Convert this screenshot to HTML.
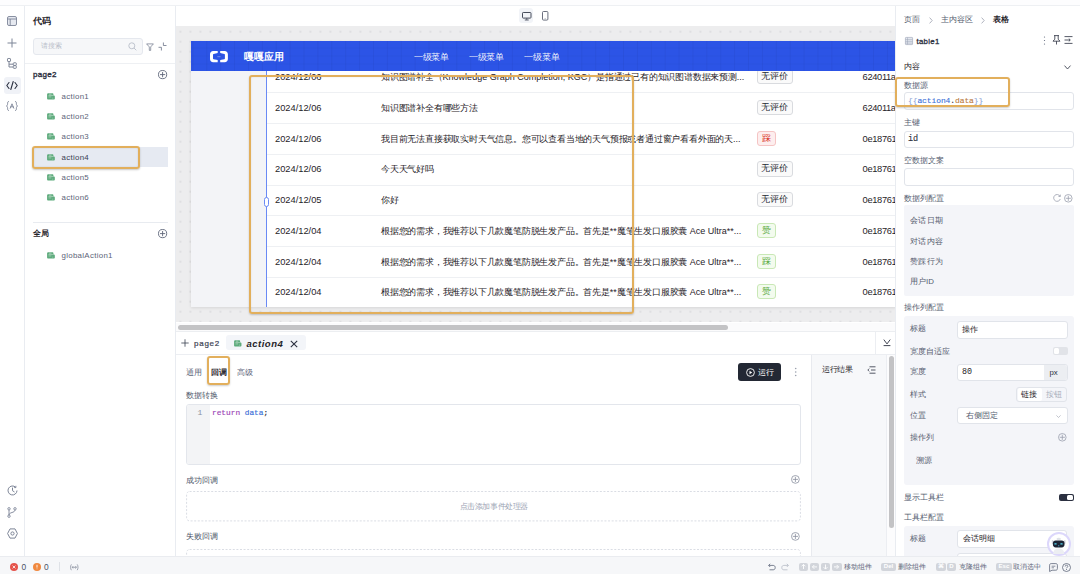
<!DOCTYPE html>
<html><head><meta charset="utf-8">
<style>
*{box-sizing:border-box;margin:0;padding:0}
html,body{width:1080px;height:574px;overflow:hidden;background:#fff;font-family:"Liberation Sans",sans-serif;color:#1f2329}
.a{position:absolute}
.t{position:absolute;white-space:nowrap;line-height:12px;height:12px}
svg{position:absolute;overflow:visible}
.mono{font-family:"Liberation Mono",monospace}
</style></head><body>
<!-- top strip -->
<div class="a" style="left:0;top:0;width:1080px;height:6px;background:#fdfdfe;border-bottom:1px solid #eef0f3"></div>

<!-- LEFT ICON BAR -->
<div class="a" style="left:0;top:6px;width:25px;height:551px;background:#fff;border-right:1px solid #e9ecf1"></div>

<svg style="left:7px;top:15.5px" width="10" height="10" viewBox="0 0 10 10"><rect x="0.5" y="0.5" width="9" height="9" rx="1.5" fill="#e6e9f0" stroke="#7d8597" stroke-width="0.9"/><line x1="0.5" y1="3" x2="9.5" y2="3" stroke="#7d8597" stroke-width="0.9"/><line x1="3.2" y1="3" x2="3.2" y2="9.5" stroke="#7d8597" stroke-width="0.9"/></svg>
<svg style="left:7px;top:37.5px" width="10" height="10" viewBox="0 0 10 10"><path d="M5 0.5V9.5M0.5 5H9.5" stroke="#7d8597" stroke-width="1"/></svg>
<svg style="left:7px;top:57.5px" width="10" height="11" viewBox="0 0 10 11"><rect x="0.5" y="0.5" width="3" height="3" rx="0.6" fill="none" stroke="#7d8597"/><path d="M2 3.5V9H6M2 6.2H6" fill="none" stroke="#7d8597"/><rect x="6.3" y="4.8" width="3" height="2.6" rx="0.6" fill="none" stroke="#7d8597"/><rect x="6.3" y="7.7" width="3" height="2.6" rx="0.6" fill="none" stroke="#7d8597"/></svg>
<div class="a" style="left:3.5px;top:76.5px;width:17.5px;height:17px;border-radius:3px;background:#f0f2f7"></div>
<svg style="left:6px;top:80.5px" width="12" height="9" viewBox="0 0 12 9"><path d="M3 1.5L0.8 4.5L3 7.5M9 1.5L11.2 4.5L9 7.5M7.2 0.5L4.8 8.5" fill="none" stroke="#2b3040" stroke-width="1.1" stroke-linecap="round" stroke-linejoin="round"/></svg>
<svg style="left:6px;top:101px" width="12" height="10" viewBox="0 0 12 10"><path d="M2.6 0.5C1.5 0.5 1.6 1.5 1.6 2.8C1.6 4 1.2 4.8 0.5 5C1.2 5.2 1.6 6 1.6 7.2C1.6 8.5 1.5 9.5 2.6 9.5M9.4 0.5C10.5 0.5 10.4 1.5 10.4 2.8C10.4 4 10.8 4.8 11.5 5C10.8 5.2 10.4 6 10.4 7.2C10.4 8.5 10.5 9.5 9.4 9.5M4.2 7.2L6 2.8L7.8 7.2M4.8 5.8H7.2" fill="none" stroke="#7d8597" stroke-width="0.9" stroke-linecap="round"/></svg>
<svg style="left:6.5px;top:484.5px" width="11" height="11" viewBox="0 0 11 11"><path d="M10 5.5A4.5 4.5 0 1 1 8.7 2.3" fill="none" stroke="#7d8597" stroke-width="1"/><path d="M8.9 0.8V2.6H7.1" fill="none" stroke="#7d8597" stroke-width="0.9"/><path d="M5.5 3V5.7L7.2 6.8" fill="none" stroke="#7d8597" stroke-width="1" stroke-linecap="round"/></svg>
<svg style="left:7px;top:506.5px" width="10" height="11" viewBox="0 0 10 11"><circle cx="2" cy="1.8" r="1.2" fill="none" stroke="#7d8597" stroke-width="0.9"/><circle cx="2" cy="9.2" r="1.2" fill="none" stroke="#7d8597" stroke-width="0.9"/><circle cx="8" cy="1.8" r="1.2" fill="none" stroke="#7d8597" stroke-width="0.9"/><path d="M2 3V8M8 3C8 6 2 5 2 8" fill="none" stroke="#7d8597" stroke-width="0.9"/></svg>
<svg style="left:6.5px;top:527.5px" width="11" height="11" viewBox="0 0 11 11"><path d="M3 0.9H8L10.4 5.5L8 10.1H3L0.6 5.5Z" fill="none" stroke="#7d8597" stroke-width="1" stroke-linejoin="round"/><circle cx="5.5" cy="5.5" r="1.6" fill="none" stroke="#7d8597" stroke-width="1"/></svg>


<!-- LEFT PANEL -->
<div class="a" style="left:25px;top:6px;width:151px;height:551px;background:#fff;border-right:1px solid #e9ecf1"></div>

<div class="t" style="left:33px;top:14.5px;font-size:9px;font-weight:bold;color:#1f2329">代码</div>
<div class="a" style="left:33px;top:37.5px;width:109.5px;height:17px;border-radius:3px;background:#f6f7f9;border:1px solid #e5e8ee"></div>
<div class="t" style="left:41px;top:40px;font-size:7.4px;color:#b9bec9">请搜索</div>
<svg style="left:127.5px;top:42px" width="9" height="9" viewBox="0 0 9 9"><circle cx="3.8" cy="3.8" r="3" fill="none" stroke="#b9bec9" stroke-width="0.9"/><path d="M6 6L8.3 8.3" stroke="#b9bec9" stroke-width="0.9"/></svg>
<svg style="left:146px;top:42.5px" width="8" height="8" viewBox="0 0 8 8"><path d="M0.6 0.9H7.4L4.7 3.9V7.4H3.3V3.9Z" fill="none" stroke="#6a7286" stroke-width="0.7" stroke-linejoin="round"/></svg>
<svg style="left:158px;top:41.5px" width="9" height="9" viewBox="0 0 9 9"><path d="M0.5 5.3H3.4V8.5M5.4 0.5V3.5H8.5" fill="none" stroke="#6a7286" stroke-width="0.8"/></svg>
<div class="a" style="left:25px;top:62.5px;width:150px;height:1px;background:#eef0f3"></div>
<div class="t" style="left:33px;top:68.8px;font-size:8px;letter-spacing:0.3px;-webkit-text-stroke:0.35px #2b3040;color:#2b3040">page2</div>
<svg style="left:157.8px;top:69.9px" width="9.2" height="9.2" viewBox="0 0 9.2 9.2"><circle cx="4.6" cy="4.6" r="4.1" fill="none" stroke="#5c6478" stroke-width="0.9"/><path d="M4.6 1.9999999999999996V7.199999999999999M1.9999999999999996 4.6H7.199999999999999" stroke="#5c6478" stroke-width="0.9"/></svg>
<svg style="left:47px;top:92.7px" width="8.4" height="6.8" viewBox="0 0 9 9" preserveAspectRatio="none"><path d="M1.6 0.3H5.6C6.4 0.3 6.9 0.8 6.9 1.6V3.4H7.2C7.9 3.4 8.4 3.9 8.4 4.6V7.2C8.4 8 7.9 8.5 7.2 8.5H1.4C0.6 8.5 0.1 8 0.1 7.2V1.8C0.1 0.9 0.7 0.3 1.6 0.3Z" fill="#5dab7c"/><path d="M2.2 1.6H4.8M1.6 3.4H6.9M1.6 5.2H4.6M6.2 6.2V7.4" stroke="#fff" stroke-width="0.55" stroke-opacity="0.85"/></svg><div class="t" style="left:61.5px;top:90.6px;font-size:7.9px;letter-spacing:0.3px;color:#5c6478">action1</div><svg style="left:47px;top:113.0px" width="8.4" height="6.8" viewBox="0 0 9 9" preserveAspectRatio="none"><path d="M1.6 0.3H5.6C6.4 0.3 6.9 0.8 6.9 1.6V3.4H7.2C7.9 3.4 8.4 3.9 8.4 4.6V7.2C8.4 8 7.9 8.5 7.2 8.5H1.4C0.6 8.5 0.1 8 0.1 7.2V1.8C0.1 0.9 0.7 0.3 1.6 0.3Z" fill="#5dab7c"/><path d="M2.2 1.6H4.8M1.6 3.4H6.9M1.6 5.2H4.6M6.2 6.2V7.4" stroke="#fff" stroke-width="0.55" stroke-opacity="0.85"/></svg><div class="t" style="left:61.5px;top:110.9px;font-size:7.9px;letter-spacing:0.3px;color:#5c6478">action2</div><svg style="left:47px;top:132.9px" width="8.4" height="6.8" viewBox="0 0 9 9" preserveAspectRatio="none"><path d="M1.6 0.3H5.6C6.4 0.3 6.9 0.8 6.9 1.6V3.4H7.2C7.9 3.4 8.4 3.9 8.4 4.6V7.2C8.4 8 7.9 8.5 7.2 8.5H1.4C0.6 8.5 0.1 8 0.1 7.2V1.8C0.1 0.9 0.7 0.3 1.6 0.3Z" fill="#5dab7c"/><path d="M2.2 1.6H4.8M1.6 3.4H6.9M1.6 5.2H4.6M6.2 6.2V7.4" stroke="#fff" stroke-width="0.55" stroke-opacity="0.85"/></svg><div class="t" style="left:61.5px;top:130.8px;font-size:7.9px;letter-spacing:0.3px;color:#5c6478">action3</div>
<div class="a" style="left:33px;top:147px;width:134.5px;height:20px;background:#e6eaf2"></div>
<svg style="left:47px;top:153.5px" width="8.4" height="6.8" viewBox="0 0 9 9" preserveAspectRatio="none"><path d="M1.6 0.3H5.6C6.4 0.3 6.9 0.8 6.9 1.6V3.4H7.2C7.9 3.4 8.4 3.9 8.4 4.6V7.2C8.4 8 7.9 8.5 7.2 8.5H1.4C0.6 8.5 0.1 8 0.1 7.2V1.8C0.1 0.9 0.7 0.3 1.6 0.3Z" fill="#5dab7c"/><path d="M2.2 1.6H4.8M1.6 3.4H6.9M1.6 5.2H4.6M6.2 6.2V7.4" stroke="#fff" stroke-width="0.55" stroke-opacity="0.85"/></svg><div class="t" style="left:61.5px;top:151.9px;font-size:7.9px;letter-spacing:0.3px;color:#3a4152">action4</div>
<div class="a" style="left:32.3px;top:146.2px;width:107.8px;height:23px;border:2px solid #e2af5c;border-radius:3px;box-shadow:0 1px 2px rgba(0,0,0,0.22), inset 0 0 2px rgba(0,0,0,0.12)"></div>
<svg style="left:47px;top:173.6px" width="8.4" height="6.8" viewBox="0 0 9 9" preserveAspectRatio="none"><path d="M1.6 0.3H5.6C6.4 0.3 6.9 0.8 6.9 1.6V3.4H7.2C7.9 3.4 8.4 3.9 8.4 4.6V7.2C8.4 8 7.9 8.5 7.2 8.5H1.4C0.6 8.5 0.1 8 0.1 7.2V1.8C0.1 0.9 0.7 0.3 1.6 0.3Z" fill="#5dab7c"/><path d="M2.2 1.6H4.8M1.6 3.4H6.9M1.6 5.2H4.6M6.2 6.2V7.4" stroke="#fff" stroke-width="0.55" stroke-opacity="0.85"/></svg><div class="t" style="left:61.5px;top:171.5px;font-size:7.9px;letter-spacing:0.3px;color:#5c6478">action5</div><svg style="left:47px;top:193.9px" width="8.4" height="6.8" viewBox="0 0 9 9" preserveAspectRatio="none"><path d="M1.6 0.3H5.6C6.4 0.3 6.9 0.8 6.9 1.6V3.4H7.2C7.9 3.4 8.4 3.9 8.4 4.6V7.2C8.4 8 7.9 8.5 7.2 8.5H1.4C0.6 8.5 0.1 8 0.1 7.2V1.8C0.1 0.9 0.7 0.3 1.6 0.3Z" fill="#5dab7c"/><path d="M2.2 1.6H4.8M1.6 3.4H6.9M1.6 5.2H4.6M6.2 6.2V7.4" stroke="#fff" stroke-width="0.55" stroke-opacity="0.85"/></svg><div class="t" style="left:61.5px;top:191.8px;font-size:7.9px;letter-spacing:0.3px;color:#5c6478">action6</div>
<div class="a" style="left:33px;top:222px;width:134.5px;height:1px;background:#e8ebf0"></div>
<div class="t" style="left:33px;top:227.5px;font-size:7.8px;font-weight:bold;color:#1f2329">全局</div>
<svg style="left:157.8px;top:228.8px" width="9.2" height="9.2" viewBox="0 0 9.2 9.2"><circle cx="4.6" cy="4.6" r="4.1" fill="none" stroke="#5c6478" stroke-width="0.9"/><path d="M4.6 1.9999999999999996V7.199999999999999M1.9999999999999996 4.6H7.199999999999999" stroke="#5c6478" stroke-width="0.9"/></svg>
<svg style="left:47px;top:251.6px" width="8.4" height="6.8" viewBox="0 0 9 9" preserveAspectRatio="none"><path d="M1.6 0.3H5.6C6.4 0.3 6.9 0.8 6.9 1.6V3.4H7.2C7.9 3.4 8.4 3.9 8.4 4.6V7.2C8.4 8 7.9 8.5 7.2 8.5H1.4C0.6 8.5 0.1 8 0.1 7.2V1.8C0.1 0.9 0.7 0.3 1.6 0.3Z" fill="#5dab7c"/><path d="M2.2 1.6H4.8M1.6 3.4H6.9M1.6 5.2H4.6M6.2 6.2V7.4" stroke="#fff" stroke-width="0.55" stroke-opacity="0.85"/></svg><div class="t" style="left:61.5px;top:249.5px;font-size:7.9px;letter-spacing:0.3px;color:#5c6478">globalAction1</div>


<!-- CANVAS -->

<div class="a" style="left:176px;top:6px;width:720px;height:20px;background:#fff"></div>
<div class="a" style="left:519.3px;top:8px;width:13.7px;height:15.2px;border-radius:3px;background:#f2f4f8"></div>
<svg style="left:521.7px;top:11.6px" width="9.5" height="8.6" viewBox="0 0 9.5 8.6"><rect x="0.5" y="0.5" width="8.5" height="5.6" rx="0.7" fill="none" stroke="#454b5a" stroke-width="1"/><path d="M4.75 6.2V7.8M2.8 8H6.7" stroke="#454b5a" stroke-width="0.9"/></svg><svg style="left:541.7px;top:11.1px" width="6.4" height="9.6" viewBox="0 0 6.4 9.6"><rect x="0.5" y="0.5" width="5.4" height="8.6" rx="1" fill="none" stroke="#5a6070" stroke-width="0.9"/><path d="M2.6 7.6H3.8" stroke="#8a90a0" stroke-width="0.6"/></svg>
<div class="a" style="left:176px;top:26px;width:720px;height:296px;background-color:#ededee;background-image:radial-gradient(circle at 5px 5px,#cfcfd3 0.55px,transparent 0.85px);background-size:10px 10px;background-position:-0.6px 0.7px"></div>
<div class="a" style="left:190.5px;top:41px;width:705.5px;height:266px;background:#f3f4f7;box-shadow:0 1px 3px rgba(0,0,0,0.1)"></div>
<div class="a" style="left:267px;top:71px;width:629px;height:236px;background:#fff;overflow:hidden">
</div>
<div class="a" style="left:176px;top:41px;width:720px;height:272px;overflow:hidden">
<div class="a" style="left:-176px;top:-41px;width:1080px;height:574px"><div class="t" style="left:275px;top:71.2px;font-size:9.3px;color:#1f2329">2024/12/06</div><div class="t" style="left:381px;top:71.2px;font-size:8.6px;color:#1f2329;letter-spacing:-0.2px">知识图谱补全（<span style="letter-spacing:0;font-size:9px">Knowledge Graph Completion, KGC</span>）是指通过已有的知识图谱数据来预测<span style="letter-spacing:0;font-size:9px">...</span></div><div class="a" style="left:756.5px;top:69.2px;width:36px;height:15.2px;border-radius:3px;background:#fafafa;border:1px solid #d9dbdf;color:#262a33;font-size:9px;line-height:13.5px;text-align:center;white-space:nowrap">无评价</div><div class="t" style="left:862.6px;top:71.2px;font-size:9.3px;letter-spacing:-0.35px;color:#1f2329">624011a</div><div class="a" style="left:267px;top:92.2px;width:629px;height:1px;background:#eef0f3"></div><div class="t" style="left:275px;top:101.9px;font-size:9.3px;color:#1f2329">2024/12/06</div><div class="t" style="left:381px;top:101.9px;font-size:8.6px;color:#1f2329;letter-spacing:-0.2px">知识图谱补全有哪些方法</div><div class="a" style="left:756.5px;top:99.9px;width:36px;height:15.2px;border-radius:3px;background:#fafafa;border:1px solid #d9dbdf;color:#262a33;font-size:9px;line-height:13.5px;text-align:center;white-space:nowrap">无评价</div><div class="t" style="left:862.6px;top:101.9px;font-size:9.3px;letter-spacing:-0.35px;color:#1f2329">624011a</div><div class="a" style="left:267px;top:123.0px;width:629px;height:1px;background:#eef0f3"></div><div class="t" style="left:275px;top:132.7px;font-size:9.3px;color:#1f2329">2024/12/06</div><div class="t" style="left:381px;top:132.7px;font-size:8.6px;color:#1f2329;letter-spacing:-0.2px">我目前无法直接获取实时天气信息。您可以查看当地的天气预报或者通过窗户看看外面的天<span style="letter-spacing:0;font-size:9px">...</span></div><div class="a" style="left:756.5px;top:130.7px;width:19px;height:15.2px;border-radius:3px;background:#fdeeee;border:1px solid #f5c4c4;color:#d93026;font-size:9px;line-height:13.5px;text-align:center;white-space:nowrap">踩</div><div class="t" style="left:862.6px;top:132.7px;font-size:9.3px;letter-spacing:-0.35px;color:#1f2329">0e18761</div><div class="a" style="left:267px;top:153.8px;width:629px;height:1px;background:#eef0f3"></div><div class="t" style="left:275px;top:163.4px;font-size:9.3px;color:#1f2329">2024/12/06</div><div class="t" style="left:381px;top:163.4px;font-size:8.6px;color:#1f2329;letter-spacing:-0.2px">今天天气好吗</div><div class="a" style="left:756.5px;top:161.4px;width:36px;height:15.2px;border-radius:3px;background:#fafafa;border:1px solid #d9dbdf;color:#262a33;font-size:9px;line-height:13.5px;text-align:center;white-space:nowrap">无评价</div><div class="t" style="left:862.6px;top:163.4px;font-size:9.3px;letter-spacing:-0.35px;color:#1f2329">0e18761</div><div class="a" style="left:267px;top:184.6px;width:629px;height:1px;background:#eef0f3"></div><div class="t" style="left:275px;top:194.1px;font-size:9.3px;color:#1f2329">2024/12/05</div><div class="t" style="left:381px;top:194.1px;font-size:8.6px;color:#1f2329;letter-spacing:-0.2px">你好</div><div class="a" style="left:756.5px;top:192.1px;width:36px;height:15.2px;border-radius:3px;background:#fafafa;border:1px solid #d9dbdf;color:#262a33;font-size:9px;line-height:13.5px;text-align:center;white-space:nowrap">无评价</div><div class="t" style="left:862.6px;top:194.1px;font-size:9.3px;letter-spacing:-0.35px;color:#1f2329">0e18761</div><div class="a" style="left:267px;top:215.4px;width:629px;height:1px;background:#eef0f3"></div><div class="t" style="left:275px;top:224.9px;font-size:9.3px;color:#1f2329">2024/12/04</div><div class="t" style="left:381px;top:224.9px;font-size:8.6px;color:#1f2329;letter-spacing:-0.2px">根据您的需求，我推荐以下几款魔笔防脱生发产品。首先是<span style="letter-spacing:0;font-size:9px">**</span>魔笔生发口服胶囊<span style="letter-spacing:0;font-size:9px"> Ace Ultra**...</span></div><div class="a" style="left:756.5px;top:222.9px;width:19px;height:15.2px;border-radius:3px;background:#f3fbee;border:1px solid #c9e8b6;color:#56a63a;font-size:9px;line-height:13.5px;text-align:center;white-space:nowrap">赞</div><div class="t" style="left:862.6px;top:224.9px;font-size:9.3px;letter-spacing:-0.35px;color:#1f2329">0e18761</div><div class="a" style="left:267px;top:246.2px;width:629px;height:1px;background:#eef0f3"></div><div class="t" style="left:275px;top:255.6px;font-size:9.3px;color:#1f2329">2024/12/04</div><div class="t" style="left:381px;top:255.6px;font-size:8.6px;color:#1f2329;letter-spacing:-0.2px">根据您的需求，我推荐以下几款魔笔防脱生发产品。首先是<span style="letter-spacing:0;font-size:9px">**</span>魔笔生发口服胶囊<span style="letter-spacing:0;font-size:9px"> Ace Ultra**...</span></div><div class="a" style="left:756.5px;top:253.6px;width:19px;height:15.2px;border-radius:3px;background:#f3fbee;border:1px solid #c9e8b6;color:#56a63a;font-size:9px;line-height:13.5px;text-align:center;white-space:nowrap">踩</div><div class="t" style="left:862.6px;top:255.6px;font-size:9.3px;letter-spacing:-0.35px;color:#1f2329">0e18761</div><div class="a" style="left:267px;top:277.0px;width:629px;height:1px;background:#eef0f3"></div><div class="t" style="left:275px;top:286.3px;font-size:9.3px;color:#1f2329">2024/12/04</div><div class="t" style="left:381px;top:286.3px;font-size:8.6px;color:#1f2329;letter-spacing:-0.2px">根据您的需求，我推荐以下几款魔笔防脱生发产品。首先是<span style="letter-spacing:0;font-size:9px">**</span>魔笔生发口服胶囊<span style="letter-spacing:0;font-size:9px"> Ace Ultra**...</span></div><div class="a" style="left:756.5px;top:284.3px;width:19px;height:15.2px;border-radius:3px;background:#f3fbee;border:1px solid #c9e8b6;color:#56a63a;font-size:9px;line-height:13.5px;text-align:center;white-space:nowrap">赞</div><div class="t" style="left:862.6px;top:286.3px;font-size:9.3px;letter-spacing:-0.35px;color:#1f2329">0e18761</div></div>
</div>
<div class="a" style="left:190.5px;top:41px;width:705.5px;height:30px;background-color:#2c54e6;background-image:linear-gradient(90deg,rgba(0,0,40,0.05) 1px,transparent 1px),linear-gradient(0deg,rgba(0,0,40,0.035) 1px,transparent 1px);background-size:13.9px 8px;background-position:1.4px 0,0 -0.5px"></div>
<svg style="left:209.9px;top:50.6px" width="18" height="11.2" viewBox="0 0 18 11.2"><path d="M7.7 0H3.2C1.3 0 0 1.3 0 3.2V8C0 9.9 1.3 11.2 3.2 11.2H7.7V9.1L3.6 8.3C3.2 8.2 3 8 3 7.6V3.6C3 3.2 3.2 3 3.6 2.9L7.7 2.1Z" fill="#fff"/><path d="M10.2 0H14.7C16.6 0 17.9 1.3 17.9 3.2V8C17.9 9.9 16.6 11.2 14.7 11.2H10.2V9.1L14.3 8.3C14.7 8.2 14.9 8 14.9 7.6V3.6C14.9 3.2 14.7 3 14.3 2.9L10.2 2.1Z" fill="#fff"/><path d="M7.3 5.7H10.6" stroke="rgba(255,255,255,0.45)" stroke-width="0.7"/></svg>
<div class="t" style="left:243.5px;top:50.5px;font-size:10px;font-weight:bold;color:#fff">嘎嘎应用</div>
<div class="t" style="left:413.8px;top:50.7px;font-size:8.6px;letter-spacing:-0.2px;color:rgba(255,255,255,0.95)">一级菜单</div>
<div class="t" style="left:468.8px;top:50.7px;font-size:8.6px;letter-spacing:-0.2px;color:rgba(255,255,255,0.95)">一级菜单</div>
<div class="t" style="left:524.2px;top:50.7px;font-size:8.6px;letter-spacing:-0.2px;color:rgba(255,255,255,0.95)">一级菜单</div>
<div class="a" style="left:266px;top:71px;width:1px;height:236px;background:#6a8af5"></div>
<div class="a" style="left:264px;top:197px;width:5px;height:10px;border:1px solid #6a8af5;border-radius:2.5px;background:#fff"></div>
<div class="a" style="left:248.8px;top:74.7px;width:385.2px;height:239px;border:2px solid #e2af5c;border-radius:3px;box-shadow:0 1px 2px rgba(0,0,0,0.2), inset 0 0 2px rgba(0,0,0,0.1)"></div>
<div class="a" style="left:176px;top:322.5px;width:720px;height:9.5px;background:#fbfbfc;border-bottom:1px solid #eceef1"></div>
<div class="a" style="left:178px;top:325px;width:550px;height:5px;border-radius:3px;background:#c3c3c5"></div>


<!-- BOTTOM PANEL -->

<div class="a" style="left:176px;top:332px;width:720px;height:225px;background:#fff"></div>
<div class="a" style="left:176px;top:353.5px;width:720px;height:1px;background:#eceef2"></div>
<svg style="left:180.5px;top:339px" width="8" height="8" viewBox="0 0 8 8"><path d="M4 0.3V7.7M0.3 4H7.7" stroke="#3a4152" stroke-width="0.8"/></svg>
<div class="t" style="left:194px;top:338.2px;font-size:8px;letter-spacing:0.75px;-webkit-text-stroke:0.2px #3a4152;color:#3a4152">page2</div>
<div class="a" style="left:225.5px;top:335.3px;width:80px;height:14.8px;border-radius:3px;background:#f3f5f9"></div>
<svg style="left:234px;top:340px" width="8" height="6.8" viewBox="0 0 9 9" preserveAspectRatio="none"><path d="M1.6 0.3H5.6C6.4 0.3 6.9 0.8 6.9 1.6V3.4H7.2C7.9 3.4 8.4 3.9 8.4 4.6V7.2C8.4 8 7.9 8.5 7.2 8.5H1.4C0.6 8.5 0.1 8 0.1 7.2V1.8C0.1 0.9 0.7 0.3 1.6 0.3Z" fill="#5dab7c"/><path d="M2.2 1.6H4.8M1.6 3.4H6.9M1.6 5.2H4.6M6.2 6.2V7.4" stroke="#fff" stroke-width="0.55" stroke-opacity="0.85"/></svg>
<div class="t" style="left:246.5px;top:337.9px;font-size:9.5px;font-weight:bold;font-style:italic;letter-spacing:0.5px;color:#1f2329">action4</div>
<svg style="left:290px;top:339.5px" width="8" height="8" viewBox="0 0 8 8"><path d="M0.8 0.8L7.2 7.2M7.2 0.8L0.8 7.2" stroke="#2b3040" stroke-width="1.1"/></svg>
<div class="a" style="left:875px;top:332px;width:1px;height:21.5px;background:#eceef2"></div>
<svg style="left:882.5px;top:338.5px" width="8" height="8" viewBox="0 0 8 8"><path d="M0.8 0.6L4 4.9L7.2 0.6M0.6 6.6H7.4" fill="none" stroke="#2b3040" stroke-width="0.9"/></svg>

<div class="t" style="left:185.5px;top:367px;font-size:7.5px;color:#5c6478">通用</div>
<div class="t" style="left:211px;top:367px;font-size:7.5px;font-weight:bold;color:#1f2329">回调</div>
<div class="t" style="left:236.5px;top:367px;font-size:7.5px;color:#5c6478">高级</div>
<div class="a" style="left:206.5px;top:356.2px;width:23.5px;height:28.4px;border:2px solid #e2af5c;border-radius:3px;box-shadow:0 1px 2px rgba(0,0,0,0.2)"></div>

<div class="a" style="left:738px;top:363px;width:43px;height:17.5px;border-radius:3px;background:#232834"></div>
<svg style="left:745.5px;top:367.5px" width="9" height="9" viewBox="0 0 9 9"><circle cx="4.5" cy="4.5" r="3.9" fill="none" stroke="#fff" stroke-width="0.9"/><path d="M3.5 2.8V6.2L6.2 4.5Z" fill="#fff"/></svg>
<div class="t" style="left:758.3px;top:366.7px;font-size:7.6px;color:#fff">运行</div>
<svg style="left:793.8px;top:367px" width="3" height="10" viewBox="0 0 3 10"><circle cx="1.7" cy="1.5" r="0.8" fill="#9aa0ad"/><circle cx="1.7" cy="5" r="0.8" fill="#9aa0ad"/><circle cx="1.7" cy="8.5" r="0.8" fill="#9aa0ad"/></svg>

<div class="t" style="left:185.5px;top:390px;font-size:7.6px;color:#4f576a">数据转换</div>
<div class="a" style="left:185.5px;top:403.8px;width:615px;height:61.7px;border:1px solid #e3e6ec;border-radius:3px;background:#fff;overflow:hidden"><div class="a" style="left:0;top:0;width:23px;height:61px;background:#f3f4f6"></div></div>
<div class="t mono" style="left:197.5px;top:407px;font-size:8px;color:#8a90a0">1</div>
<div class="t mono" style="left:212px;top:407px;font-size:7.8px;color:#1f2329;-webkit-text-stroke:0.15px"><span style="color:#9b3fb5">return</span> <span style="color:#3a6fd8">data</span>;</div>

<div class="t" style="left:185.5px;top:475px;font-size:7.6px;color:#4f576a">成功回调</div>
<svg style="left:791.1px;top:475.40000000000003px" width="8.8" height="8.8" viewBox="0 0 8.8 8.8"><circle cx="4.4" cy="4.4" r="3.9000000000000004" fill="none" stroke="#8a90a0" stroke-width="0.8"/><path d="M4.4 1.8000000000000003V7.0M1.8000000000000003 4.4H7.0" stroke="#8a90a0" stroke-width="0.8"/></svg>
<svg style="left:185.5px;top:491.3px" width="615" height="30.4" viewBox="0 0 615 30.4"><rect x="0.5" y="0.5" width="614" height="29.4" rx="3" fill="none" stroke="#dadde4" stroke-width="1" stroke-dasharray="2 1.6"/></svg>
<div class="t" style="left:459.5px;top:501.1px;font-size:7.5px;letter-spacing:-0.4px;color:#9ca4b4">点击添加事件处理器</div>
<div class="t" style="left:185.5px;top:530.6px;font-size:7.6px;color:#4f576a">失败回调</div>
<svg style="left:791.1px;top:531.6px" width="8.8" height="8.8" viewBox="0 0 8.8 8.8"><circle cx="4.4" cy="4.4" r="3.9000000000000004" fill="none" stroke="#8a90a0" stroke-width="0.8"/><path d="M4.4 1.8000000000000003V7.0M1.8000000000000003 4.4H7.0" stroke="#8a90a0" stroke-width="0.8"/></svg>
<svg style="left:185.5px;top:549px" width="615" height="30.4" viewBox="0 0 615 30.4"><rect x="0.5" y="0.5" width="614" height="29.4" rx="3" fill="none" stroke="#dadde4" stroke-width="1" stroke-dasharray="2 1.6"/></svg>

<div class="a" style="left:810.8px;top:354.5px;width:85px;height:203px;background:#f7f8fa;border-left:1px solid #e8eaef"></div><div class="a" style="left:886px;top:354.5px;width:9.5px;height:203px;background:#fcfcfd;border-left:1px solid #eceef2"></div>
<div class="t" style="left:822px;top:363.7px;font-size:7.5px;letter-spacing:-0.3px;color:#1f2329">运行结果</div>
<svg style="left:866.5px;top:365.5px" width="9" height="8" viewBox="0 0 9 8"><path d="M2.5 0.8H8.5M4 4H8.5M2.5 7.2H8.5M2.2 2.6L0.8 4L2.2 5.4" fill="none" stroke="#2b3040" stroke-width="0.8"/></svg>
<div class="a" style="left:888.8px;top:356px;width:5px;height:172px;border-radius:3px;background:#c3c3c5"></div>


<!-- RIGHT PANEL -->

<div class="a" style="left:895px;top:6px;width:185px;height:551px;background:#fff;border-left:1px solid #e9ecf1"></div>
<div class="t" style="left:903.5px;top:13.6px;font-size:7.5px;color:#545c6f;">页面</div>
<svg style="left:928.8px;top:16.5px" width="4" height="7" viewBox="0 0 4 7"><path d="M0.6 0.6L3.2 3.5L0.6 6.4" fill="none" stroke="#9aa0ad" stroke-width="0.8"/></svg>
<div class="t" style="left:940.5px;top:13.6px;font-size:7.5px;color:#545c6f;">主内容区</div>
<svg style="left:980.8px;top:16.5px" width="4" height="7" viewBox="0 0 4 7"><path d="M0.6 0.6L3.2 3.5L0.6 6.4" fill="none" stroke="#9aa0ad" stroke-width="0.8"/></svg>
<div class="t" style="left:993px;top:13.6px;font-size:7.7px;color:#1f2329;font-weight:bold">表格</div>
<svg style="left:904.8px;top:37px" width="8" height="8" viewBox="0 0 8 8"><rect x="0.4" y="0.4" width="7.2" height="7.2" rx="0.6" fill="#e3e7ef" stroke="#9aa3b5" stroke-width="0.6"/><path d="M0.5 2.6H7.5M0.5 4.4H7.5M0.5 6.1H7.5M2.5 0.5V7.5" stroke="#9aa3b5" stroke-width="0.5"/></svg>
<div class="t" style="left:916.5px;top:35.6px;font-size:7.8px;color:#2b3040;letter-spacing:0.3px;-webkit-text-stroke:0.3px #2b3040">table1</div>
<svg style="left:1043px;top:35.5px" width="3" height="9" viewBox="0 0 3 9"><circle cx="1.5" cy="1" r="0.6" fill="#5c6478"/><circle cx="1.5" cy="4.5" r="0.6" fill="#5c6478"/><circle cx="1.5" cy="8" r="0.6" fill="#5c6478"/></svg>
<svg style="left:1051.5px;top:35px" width="9" height="10" viewBox="0 0 9 10"><path d="M2 0.6H7M2.8 0.6V4.2L1 6.2H8L6.2 4.2V0.6M4.5 6.2V9.5" fill="none" stroke="#2b3040" stroke-width="0.8"/></svg>
<svg style="left:1064px;top:36px" width="9" height="8" viewBox="0 0 9 8"><path d="M0.5 0.6H8.5M0.5 7.4H8.5M0.5 4H6M4.8 2.6L6.3 4L4.8 5.4" fill="none" stroke="#2b3040" stroke-width="0.8"/></svg>
<div class="t" style="left:904px;top:60.5px;font-size:7.7px;color:#1f2329;">内容</div>
<svg style="left:1064.3px;top:64.6px" width="7" height="5" viewBox="0 0 7 5"><path d="M0.5 0.6L3.5 4L6.5 0.6" fill="none" stroke="#2b3040" stroke-width="0.8"/></svg>
<div class="t" style="left:904px;top:80.1px;font-size:7.5px;color:#545c6f;">数据源</div>
<div class="a" style="left:904px;top:92.4px;width:169.7px;height:17.3px;border:1px solid #e1e4ea;border-radius:3px;background:#fff"></div>
<div class="t mono" style="left:908px;top:95.3px;font-size:8px;letter-spacing:-0.1px;color:#3a6fd8;-webkit-text-stroke:0.1px"><span style="color:#8fa6d8">{{</span>action4<span style="color:#2b3040">.</span><span style="color:#b9783c">data</span><span style="color:#8fa6d8">}}</span></div>
<div class="a" style="left:894.6px;top:76.9px;width:115.6px;height:30.2px;border:2px solid #e2af5c;border-radius:3px;box-shadow:0 1px 2px rgba(0,0,0,0.2)"></div>
<div class="t" style="left:904px;top:117.0px;font-size:7.5px;color:#545c6f;">主键</div>
<div class="a" style="left:904px;top:130.5px;width:169.7px;height:17.0px;border:1px solid #e1e4ea;border-radius:3px;background:#fff"></div>
<div class="t mono" style="left:908px;top:133px;font-size:8.5px;color:#2b3040;-webkit-text-stroke:0.1px">id</div>
<div class="t" style="left:904px;top:154.6px;font-size:7.5px;color:#545c6f;">空数据文案</div>
<div class="a" style="left:904px;top:168px;width:169.7px;height:17.7px;border:1px solid #e1e4ea;border-radius:3px;background:#fff"></div>
<div class="t" style="left:904px;top:193.2px;font-size:7.5px;color:#545c6f;">数据列配置</div>
<svg style="left:1053px;top:194px" width="8" height="8" viewBox="0 0 8 8"><path d="M7 2.2A3.4 3.4 0 1 0 7.3 5" fill="none" stroke="#9aa0ad" stroke-width="0.8"/><path d="M7.3 0.6V2.5H5.5" fill="none" stroke="#9aa0ad" stroke-width="0.8"/></svg>
<svg style="left:1064.2px;top:193.89999999999998px" width="8.6" height="8.6" viewBox="0 0 8.6 8.6"><circle cx="4.3" cy="4.3" r="3.8" fill="none" stroke="#9aa0ad" stroke-width="0.8"/><path d="M4.3 1.6999999999999997V6.9M1.6999999999999997 4.3H6.9" stroke="#9aa0ad" stroke-width="0.8"/></svg>
<div class="a" style="left:904px;top:205.2px;width:169.7px;height:90.4px;border-radius:2px;background:#f4f5f9"></div>
<div class="t" style="left:910px;top:215.3px;font-size:7.9px;letter-spacing:0.35px;color:#545c6f;">会话日期</div>
<div class="t" style="left:910px;top:235.5px;font-size:7.9px;letter-spacing:0.35px;color:#545c6f;">对话内容</div>
<div class="t" style="left:910px;top:255.7px;font-size:7.9px;letter-spacing:0.35px;color:#545c6f;">赞踩行为</div>
<div class="t" style="left:910px;top:275.7px;font-size:7.9px;color:#545c6f;">用户ID</div>
<div class="t" style="left:904px;top:302.1px;font-size:7.5px;color:#545c6f;">操作列配置</div>
<div class="a" style="left:904px;top:315.6px;width:169.7px;height:169.6px;border-radius:3px;background:#f4f5f9"></div>
<div class="t" style="left:910px;top:323.4px;font-size:7.5px;color:#545c6f;">标题</div>
<div class="a" style="left:957.4px;top:321.1px;width:110.5px;height:17.6px;border:1px solid #e1e4ea;border-radius:3px;background:#fff"></div>
<div class="t" style="left:962.3px;top:323.6px;font-size:7.7px;color:#1f2329;">操作</div>
<div class="t" style="left:910px;top:345.5px;font-size:7.5px;color:#545c6f;">宽度自适应</div>
<div class="a" style="left:1052.5px;top:347.3px;width:15px;height:7.5px;border-radius:2px;background:#e1e3e8"></div>
<div class="a" style="left:1053.5px;top:348.3px;width:5.5px;height:5.5px;border-radius:1.5px;background:#fff"></div>
<div class="t" style="left:910px;top:366.4px;font-size:7.5px;color:#545c6f;">宽度</div>
<div class="a" style="left:957.4px;top:363.7px;width:110.5px;height:17.3px;border:1px solid #e1e4ea;border-radius:3px;background:#fff;overflow:hidden"><div class="a" style="left:85.6px;top:0;width:25px;height:17px;background:#eceef2"></div></div>
<div class="t mono" style="left:962px;top:366.3px;font-size:8.4px;color:#1f2329">80</div>
<div class="t" style="left:1049.5px;top:366.8px;font-size:7.8px;color:#2b3040;">px</div>
<div class="t" style="left:910px;top:388.7px;font-size:7.5px;color:#545c6f;">样式</div>
<div class="a" style="left:1016.3px;top:386.7px;width:51.2px;height:15.8px;border:1px solid #e1e4ea;border-radius:3px;background:#f4f5f9"></div>
<div class="a" style="left:1017.5px;top:388px;width:24px;height:13.2px;border-radius:2px;background:#fff"></div>
<div class="t" style="left:1021px;top:388.9px;font-size:7.7px;color:#1f2329;">链接</div>
<div class="t" style="left:1045.5px;top:388.9px;font-size:7.7px;color:#a8aebb;">按钮</div>
<div class="t" style="left:910px;top:410.3px;font-size:7.5px;color:#545c6f;">位置</div>
<div class="a" style="left:957.4px;top:407.2px;width:110.5px;height:17.3px;border:1px solid #e1e4ea;border-radius:3px;background:#fff"></div>
<div class="t" style="left:966px;top:410.0px;font-size:7.5px;color:#545c6f;">右侧固定</div>
<svg style="left:1055.5px;top:414.5px" width="5" height="3" viewBox="0 0 5 3"><path d="M0.4 0.4L2.5 2.5L4.6 0.4" fill="none" stroke="#9aa0ad" stroke-width="0.6"/></svg>
<div class="t" style="left:910px;top:431.7px;font-size:7.5px;color:#545c6f;">操作列</div>
<svg style="left:1058.0px;top:433.4px" width="8.6" height="8.6" viewBox="0 0 8.6 8.6"><circle cx="4.3" cy="4.3" r="3.8" fill="none" stroke="#9aa0ad" stroke-width="0.8"/><path d="M4.3 1.6999999999999997V6.9M1.6999999999999997 4.3H6.9" stroke="#9aa0ad" stroke-width="0.8"/></svg>
<div class="t" style="left:916.3px;top:454.8px;font-size:7.5px;color:#545c6f;">溯源</div>
<div class="t" style="left:904px;top:491.8px;font-size:7.5px;color:#545c6f;">显示工具栏</div>
<div class="a" style="left:1058.5px;top:494.3px;width:15.3px;height:7px;border-radius:2px;background:#2b3040"></div>
<div class="a" style="left:1067.3px;top:495.3px;width:5.5px;height:5px;border-radius:1.5px;background:#fff"></div>
<div class="t" style="left:904px;top:512.0px;font-size:7.5px;color:#545c6f;">工具栏配置</div>
<div class="a" style="left:904px;top:525.5px;width:169.7px;height:40px;border-radius:3px;background:#f4f5f9"></div>
<div class="t" style="left:910px;top:533.4px;font-size:7.5px;color:#545c6f;">标题</div>
<div class="a" style="left:957.4px;top:530.3px;width:110.0px;height:17.7px;border:1px solid #e1e4ea;border-radius:3px;background:#fff"></div>
<div class="t" style="left:962.5px;top:533.4px;font-size:7.7px;color:#1f2329;">会话明细</div>
<div class="a" style="left:957.4px;top:552.7px;width:110.0px;height:17.8px;border:1px solid #e1e4ea;border-radius:3px;background:#fff"></div>


<!-- STATUS BAR -->

<div class="a" style="left:0;top:556px;width:1080px;height:18px;background:#f6f7f9;border-top:1px solid #eaecf0"></div>
<svg style="left:10.3px;top:563px" width="8" height="8" viewBox="0 0 8 8"><circle cx="4" cy="4" r="4" fill="#e5534b"/><path d="M2.6 2.6L5.4 5.4M5.4 2.6L2.6 5.4" stroke="#fff" stroke-width="0.8"/></svg>
<div class="t" style="left:21.5px;top:561.2px;font-size:8.4px;color:#4a5268;">0</div>
<svg style="left:32.5px;top:563px" width="8" height="8" viewBox="0 0 8 8"><circle cx="4" cy="4" r="4" fill="#f0883e"/><path d="M4 1.8V4.6M4 5.6V6.2" stroke="#fff" stroke-width="0.9"/></svg>
<div class="t" style="left:44px;top:561.2px;font-size:8.4px;color:#4a5268;">0</div>
<div class="a" style="left:59px;top:562px;width:1px;height:9px;background:#dfe2e7"></div>
<svg style="left:69.8px;top:564px" width="8.6" height="6.6" viewBox="0 0 8.6 6.6"><path d="M1.4 0.4C0.3 1.8 0.3 4.8 1.4 6.2M7.2 0.4C8.3 1.8 8.3 4.8 7.2 6.2M2.1 3.3H6.5M3.3 2.1L2.1 3.3L3.3 4.5M5.3 2.1L6.5 3.3L5.3 4.5" fill="none" stroke="#8a90a0" stroke-width="0.8"/></svg>
<svg style="left:768px;top:563px" width="8" height="8" viewBox="0 0 8 8"><path d="M2.2 0.8L0.6 2.4L2.2 4M0.8 2.4H5.2C6.4 2.4 7.2 3.2 7.2 4.6C7.2 6 6.4 6.8 5.2 6.8H1.5" fill="none" stroke="#5c6478" stroke-width="0.8"/></svg>
<svg style="left:780.5px;top:563px" width="8" height="8" viewBox="0 0 8 8"><path d="M5.8 0.8L7.4 2.4L5.8 4M7.2 2.4H2.8C1.6 2.4 0.8 3.2 0.8 4.6C0.8 6 1.6 6.8 2.8 6.8H6.5" fill="none" stroke="#b5bac5" stroke-width="0.8"/></svg>
<div class="a" style="left:799.2px;top:563.2px;width:8.4px;height:7.8px;border-radius:2px;background:#d2d5db;color:#fff;font-size:6px;font-weight:bold;line-height:7.8px;text-align:center;white-space:nowrap"></div><svg style="left:799.9px;top:563.2px" width="7" height="7.8" viewBox="0 0 7 7.8"><path d="M3.5 6V1.5M1.6 3.3L3.5 1.4L5.4 3.3" fill="none" stroke="#fff" stroke-width="0.9"/></svg><div class="a" style="left:809.7px;top:563.2px;width:9.3px;height:7.8px;border-radius:2px;background:#d2d5db;color:#fff;font-size:6px;font-weight:bold;line-height:7.8px;text-align:center;white-space:nowrap"></div><svg style="left:810.9px;top:563.2px" width="7" height="7.8" viewBox="0 0 7 7.8"><path d="M6 3.9H1.5M3.3 2L1.4 3.9L3.3 5.8" fill="none" stroke="#fff" stroke-width="0.9"/></svg><div class="a" style="left:821px;top:563.2px;width:8.7px;height:7.8px;border-radius:2px;background:#d2d5db;color:#fff;font-size:6px;font-weight:bold;line-height:7.8px;text-align:center;white-space:nowrap"></div><svg style="left:821.9px;top:563.2px" width="7" height="7.8" viewBox="0 0 7 7.8"><path d="M3.5 1.5V6M1.6 4.2L3.5 6.1L5.4 4.2" fill="none" stroke="#fff" stroke-width="0.9"/></svg><div class="a" style="left:832px;top:563.2px;width:9.6px;height:7.8px;border-radius:2px;background:#d2d5db;color:#fff;font-size:6px;font-weight:bold;line-height:7.8px;text-align:center;white-space:nowrap"></div><svg style="left:833.3px;top:563.2px" width="7" height="7.8" viewBox="0 0 7 7.8"><path d="M1 3.9H5.5M3.7 2L5.6 3.9L3.7 5.8" fill="none" stroke="#fff" stroke-width="0.9"/></svg>
<div class="t" style="left:843.5px;top:561.0px;font-size:7.2px;color:#5c6478;">移动组件</div>
<div class="a" style="left:881px;top:563.2px;width:15.0px;height:7.8px;border-radius:2px;background:#d2d5db;color:#fff;font-size:6px;font-weight:bold;line-height:7.8px;text-align:center;white-space:nowrap">Del</div>
<div class="t" style="left:898px;top:561.0px;font-size:7.2px;color:#5c6478;">删除组件</div>
<div class="a" style="left:935.8px;top:563.2px;width:10.2px;height:7.8px;border-radius:2px;background:#d2d5db;color:#fff;font-size:6px;font-weight:bold;line-height:7.8px;text-align:center;white-space:nowrap">⌘</div><div class="a" style="left:947px;top:563.2px;width:9.0px;height:7.8px;border-radius:2px;background:#d2d5db;color:#fff;font-size:6px;font-weight:bold;line-height:7.8px;text-align:center;white-space:nowrap">D</div>
<div class="t" style="left:958.7px;top:561.0px;font-size:7.2px;color:#5c6478;">克隆组件</div>
<div class="a" style="left:996px;top:563.2px;width:15.8px;height:7.8px;border-radius:2px;background:#d2d5db;color:#fff;font-size:6px;font-weight:bold;line-height:7.8px;text-align:center;white-space:nowrap">Esc</div>
<div class="t" style="left:1013.4px;top:561.0px;font-size:7.2px;color:#5c6478;">取消选中</div>
<svg style="left:1048.5px;top:562.6px" width="9" height="9" viewBox="0 0 9 9"><path d="M2.2 0.6H6.8C7.8 0.6 8.4 1.2 8.4 2.2V5.6C8.4 6.6 7.8 7.2 6.8 7.2H3L0.6 8.5V2.2C0.6 1.2 1.2 0.6 2.2 0.6Z" fill="none" stroke="#5c6478" stroke-width="0.8" stroke-linejoin="round"/><path d="M2.6 3.2H6.4M2.6 4.8H5" stroke="#5c6478" stroke-width="0.7"/></svg>
<svg style="left:1062.3px;top:562.5px" width="9" height="9" viewBox="0 0 9 9"><circle cx="4.5" cy="4.5" r="4" fill="none" stroke="#5c6478" stroke-width="0.8"/><path d="M3.2 3.5C3.2 2.6 3.8 2.2 4.5 2.2C5.2 2.2 5.8 2.7 5.8 3.4C5.8 4.3 4.5 4.4 4.5 5.3" fill="none" stroke="#5c6478" stroke-width="0.8"/><circle cx="4.5" cy="6.6" r="0.5" fill="#5c6478"/></svg>
<div class="a" style="left:1046.5px;top:532px;width:24.4px;height:24.4px;border-radius:50%;background:#fff;border:2.2px solid #dcd7fb"></div>
<svg style="left:1050px;top:535.5px" width="18" height="18" viewBox="0 0 18 18"><ellipse cx="8.7" cy="3" rx="2.2" ry="1.2" fill="#dfe2e8"/><rect x="1.8" y="4" width="1.6" height="4" rx="0.8" fill="#d5d8df"/><rect x="14" y="4" width="1.6" height="4" rx="0.8" fill="#d5d8df"/><rect x="2.9" y="4.6" width="11.6" height="6.8" rx="2.8" fill="#1c2535"/><rect x="4.3" y="7.3" width="2.4" height="1.1" rx="0.5" fill="#56d6f0"/><rect x="10.3" y="7.3" width="2.4" height="1.1" rx="0.5" fill="#56d6f0"/><rect x="8" y="9.4" width="1.4" height="0.8" rx="0.4" fill="#56d6f0"/><path d="M3.2 18C3.2 14 5.4 12.4 8.7 12.4C12 12.4 14.2 14 14.2 18Z" fill="#eceef2"/></svg>

</body></html>
